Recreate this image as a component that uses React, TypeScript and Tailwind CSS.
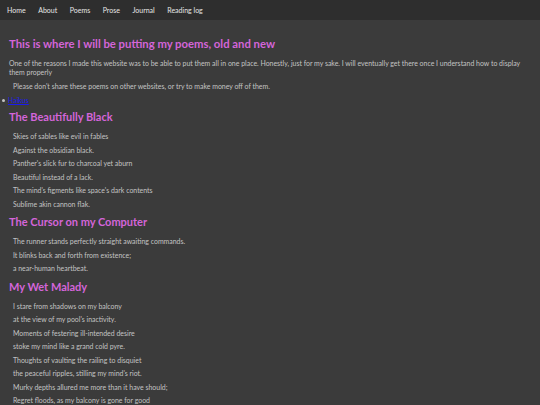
const poems = [
  {
    title: 'The Beautifully Black',
    lines: [
      'Skies of sables like evil in fables',
      'Against the obsidian black.',
      "Panther's slick fur to charcoal yet aburn",
      'Beautiful instead of a lack.',
      "The mind's figments like space's dark contents",
      'Sublime akin cannon flak.',
    ],
  },
  {
    title: 'The Cursor on my Computer',
    lines: [
      'The runner stands perfectly straight awaiting commands.',
      'It blinks back and forth from existence;',
      'a near-human heartbeat.',
    ],
  },
  {
    title: 'My Wet Malady',
    lines: [
      'I stare from shadows on my balcony',
      "at the view of my pool's inactivity.",
      'Moments of festering ill-intended desire',
      'stoke my mind like a grand cold pyre.',
      'Thoughts of vaulting the railing to disquiet',
      "the peaceful ripples, stilling my mind's riot.",
      'Murky depths allured me more than it have should;',
      'Regret floods, as my balcony is gone for good',
    ],
  },
];

const nav = ['Home', 'About', 'Poems', 'Prose', 'Journal', 'Reading log'];

export default function App() {
  return (
    <div className="w-[540px] h-[405px] overflow-hidden bg-[#3b3b3b] text-[#c4c4c4] font-['Lato',sans-serif]">
      {/* top nav */}
      <nav className="h-[20px] bg-[#2e2e2e] flex items-center gap-[12.5px] px-[7px] text-[7px] text-[#e6e6e6]">
        {nav.map((n) => (
          <span key={n}>{n}</span>
        ))}
      </nav>

      <main className="px-[9px]">
        <h1 className="mt-[17px] text-[11.3px] font-bold text-[#d465d9] leading-[14px]">
          This is where I will be putting my poems, old and new
        </h1>
        <p className="mt-[8px] max-w-[514px] text-[6.95px] leading-[9px]">
          One of the reasons I made this website was to be able to put them all in one place. Honestly, just for my sake. I will
          eventually get there once I understand how to display them properly
        </p>
        <p className="mt-[5px] pl-[4px] text-[6.95px] leading-[9px]">
          Please don't share these poems on other websites, or try to make money off of them.
        </p>
        <ul className="mt-[5px] mb-[4px] -ml-[7px] text-[6.95px] leading-[9px]">
          <li className="flex items-center gap-[3px]">
            <span className="w-[3px] h-[3px] rounded-full bg-[#c4c4c4]" />
            <a href="#" className="text-[#1a1aee] underline">
              Haikus
            </a>
          </li>
        </ul>

        {poems.map((p) => (
          <section key={p.title}>
            <h2 className="mt-[3px] text-[11px] font-bold text-[#d465d9] leading-[16px]">{p.title}</h2>
            <div className="mt-[5px] pl-[4px] flex flex-col text-[6.95px] leading-[13.5px]">
              {p.lines.map((l) => (
                <span key={l}>{l}</span>
              ))}
            </div>
          </section>
        ))}
      </main>
    </div>
  );
}
